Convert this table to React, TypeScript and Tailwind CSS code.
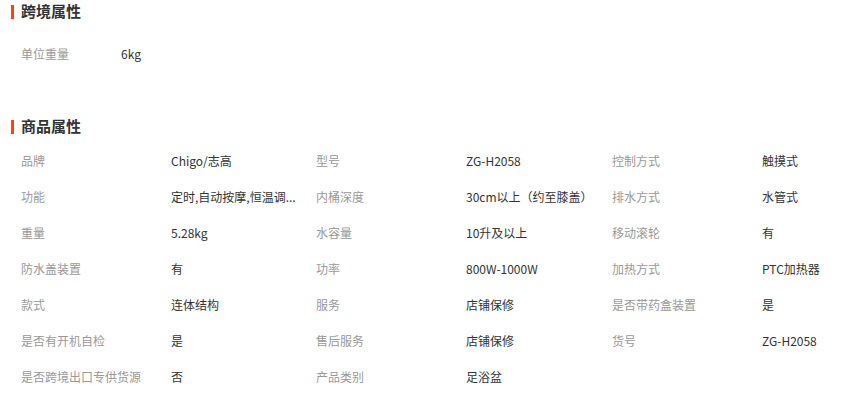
import React from "react";

const rows: [string, string][][] = [
  [["品牌", "Chigo/志高"], ["型号", "ZG-H2058"], ["控制方式", "触摸式"]],
  [["功能", "定时,自动按摩,恒温调..."], ["内桶深度", "30cm以上（约至膝盖）"], ["排水方式", "水管式"]],
  [["重量", "5.28kg"], ["水容量", "10升及以上"], ["移动滚轮", "有"]],
  [["防水盖装置", "有"], ["功率", "800W-1000W"], ["加热方式", "PTC加热器"]],
  [["款式", "连体结构"], ["服务", "店铺保修"], ["是否带药盒装置", "是"]],
  [["是否有开机自检", "是"], ["售后服务", "店铺保修"], ["货号", "ZG-H2058"]],
  [["是否跨境出口专供货源", "否"], ["产品类别", "足浴盆"]],
];

function Title({ text }: { text: string }) {
  return (
    <div className="flex items-center h-[24px] pl-[11px]">
      <div className="w-[3px] h-[14px] bg-[#ff4400]" />
      <div className="ml-[7px] text-[15px] font-bold text-[#333] leading-[22px] pb-[2px]">{text}</div>
    </div>
  );
}

export default function App() {
  return (
    <div
      className="w-[860px] h-[398px] bg-white overflow-hidden text-[12px]"
      style={{ fontFamily: '"Noto Sans CJK SC", "Microsoft YaHei", sans-serif' }}
    >
      <Title text="跨境属性" />
      <div className="mt-[12px] pl-[21px] flex items-center h-[36px]">
        <div className="w-[100px] text-[#999]">单位重量</div>
        <div className="text-[#333]">6kg</div>
      </div>
      <div className="mt-[43px]">
        <Title text="商品属性" />
      </div>
      <div className="mt-[4px] pl-[21px]">
        {rows.map((r, i) => (
          <div key={i} className="grid grid-cols-[150px_145px_150px_146px_150px_1fr] h-[36px] items-center">
            {r.map(([k, v], j) => (
              <React.Fragment key={j}>
                <div className="text-[#999] whitespace-nowrap">{k}</div>
                <div className="text-[#333] whitespace-nowrap overflow-hidden">{v}</div>
              </React.Fragment>
            ))}
          </div>
        ))}
      </div>
    </div>
  );
}
